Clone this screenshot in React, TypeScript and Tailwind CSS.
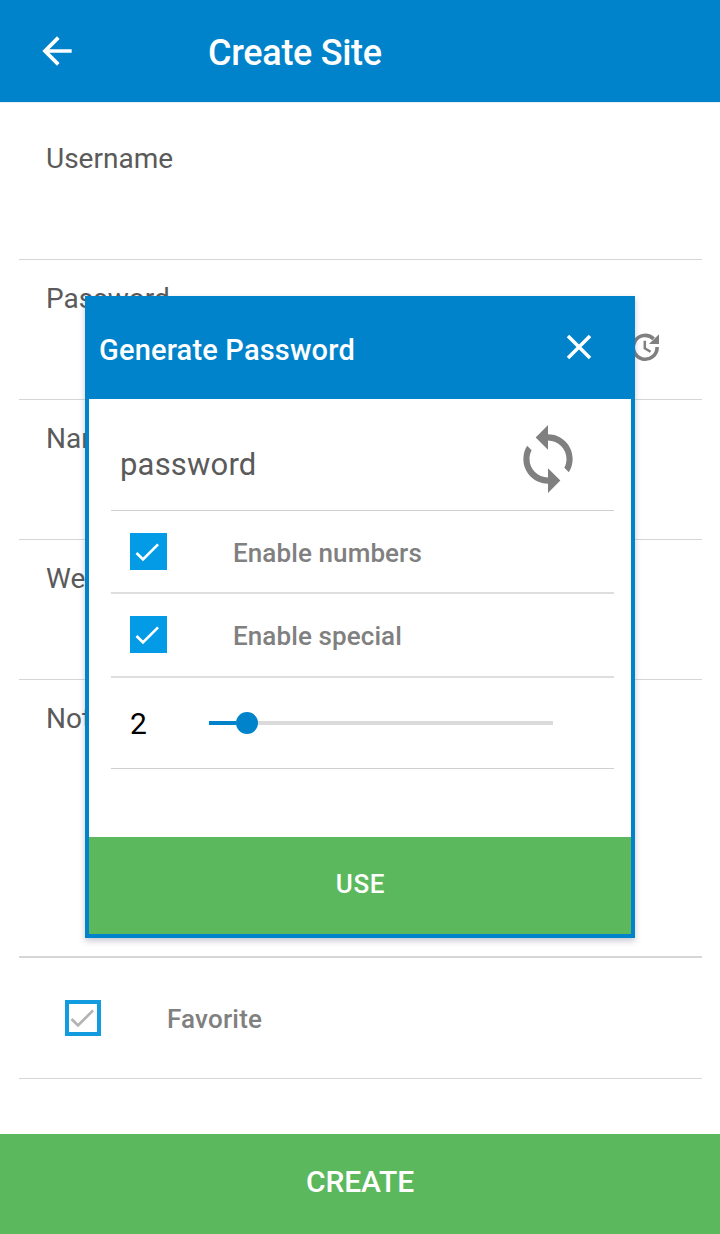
import { MdArrowBack, MdCheck, MdClose, MdLoop } from "react-icons/md";

function HistoryIcon({ className }: { className: string }) {
  return (
    <svg viewBox="0 0 29 29" fill="none" className={className}>
      <path d="M26.1 14A11.9 11.9 0 1 1 22.6 5.9" stroke="currentColor" strokeWidth="3.6" />
      <path d="M28 1.3V11H18Z" fill="currentColor" />
      <path d="M13.8 7.8V15.2L19.6 18.7" stroke="currentColor" strokeWidth="2.5" />
    </svg>
  );
}

function Field({ label, className }: { label: string; className: string }) {
  return (
    <div className={`mx-[19px] w-[683px] shrink-0 border-[#d6d6d6] pl-[27px] ${className}`}>
      <span className="block text-[28px] leading-8 text-[#5a5a5a]">{label}</span>
    </div>
  );
}

function Option({ label, className }: { label: string; className: string }) {
  return (
    <div className={`flex border-b-2 border-[#dedede] pl-[19px] ${className}`}>
      <span className="flex size-[37px] items-center justify-center bg-[#039be5] pr-[3px]">
        <MdCheck className="size-8 shrink-0 text-white" />
      </span>
      <span className="ml-[66px] mt-1 text-[26px] font-medium leading-8 tracking-[0.1px] text-[#808080]">{label}</span>
    </div>
  );
}

function GenerateDialog() {
  return (
    <section className="absolute left-[85px] top-[296px] flex h-[642px] w-[550px] flex-col border-4 border-[#0083cb] bg-white shadow-[0_3px_6px_rgba(60,60,100,0.28)]">
      <header className="flex h-[99px] shrink-0 items-start bg-[#0083cb] pl-[10px] text-white">
        <h2 className="mt-[33px] text-[29px] font-medium leading-[34px] tracking-[0.18px]">Generate Password</h2>
        <MdClose className="ml-auto mr-[31px] mt-[26px] size-[42px]" />
      </header>
      <div className="ml-[22px] w-[503px]">
        <div className="flex h-[112px] border-b border-[#cfcfcf] pl-[9px]">
          <span className="mt-12 text-[31px] leading-9 tracking-[0.2px] text-[#5a5a5a]">password</span>
          <MdLoop className="ml-auto mr-[29px] mt-[23px] size-[74px] text-[#808080]" />
        </div>
        <Option label="Enable numbers" className="h-[83px] pt-[22px]" />
        <Option label="Enable special" className="h-[84px] pt-[22px]" />
        <div className="flex h-[91px] border-b border-[#cfcfcf] pl-[19px]">
          <span className="mt-7 w-[79px] text-[30px] leading-9 text-black">2</span>
          <div className="mt-[34px] flex h-[22px] items-center">
            <span className="h-1 w-[27px] bg-[#0083cb]" />
            <span className="size-[22px] rounded-full bg-[#0083cb]" />
            <span className="h-1 w-[295px] bg-[#dadada]" />
          </div>
        </div>
      </div>
      <button className="mt-auto flex h-[97px] w-full items-center justify-center bg-[#5cb85c] pb-1 pl-px text-[26px] font-medium leading-8 tracking-[0.7px] text-white">
        USE
      </button>
    </section>
  );
}

export default function App() {
  return (
    <main className="relative flex h-[1234px] w-[720px] flex-col overflow-hidden bg-white font-[Roboto,sans-serif]">
      <header className="flex h-[103px] shrink-0 border-b border-[#e6eef2] bg-[#0083cb] text-white">
        <MdArrowBack className="ml-[35px] mt-[29px] size-11" />
        <h1 className="ml-[129px] mt-[33px] text-[36px] font-medium leading-10 tracking-[-0.3px]">Create Site</h1>
      </header>
      <Field label="Username" className="h-[157px] border-b pt-10" />
      <div className="relative flex shrink-0">
        <Field label="Password" className="h-[140px] border-b pt-[23px]" />
        <HistoryIcon className="absolute left-[631px] top-[73px] size-[29px] text-[#808080]" />
      </div>
      <Field label="Name" className="h-[140px] border-b pt-[23px]" />
      <Field label="Website" className="h-[140px] border-b pt-[23px]" />
      <Field label="Notes" className="h-[278px] border-b-2 pt-[23px]" />
      <div className="mx-[19px] flex h-[121px] w-[683px] shrink-0 border-b border-[#d6d6d6] pl-[46px] pt-[42px]">
        <span className="flex size-9 items-center justify-center border-4 border-[#129bdf]">
          <MdCheck className="-ml-[3px] size-8 shrink-0 text-[#b3b3b3]" />
        </span>
        <span className="ml-[66px] mt-[3px] text-[26px] font-medium leading-8 tracking-[0.2px] text-[#808080]">
          Favorite
        </span>
      </div>
      <button className="mt-auto flex h-[100px] w-full shrink-0 items-center justify-center bg-[#5cb85c] pb-1.5 text-[30px] font-medium tracking-[-0.1px] text-white">
        CREATE
      </button>
      <GenerateDialog />
    </main>
  );
}
